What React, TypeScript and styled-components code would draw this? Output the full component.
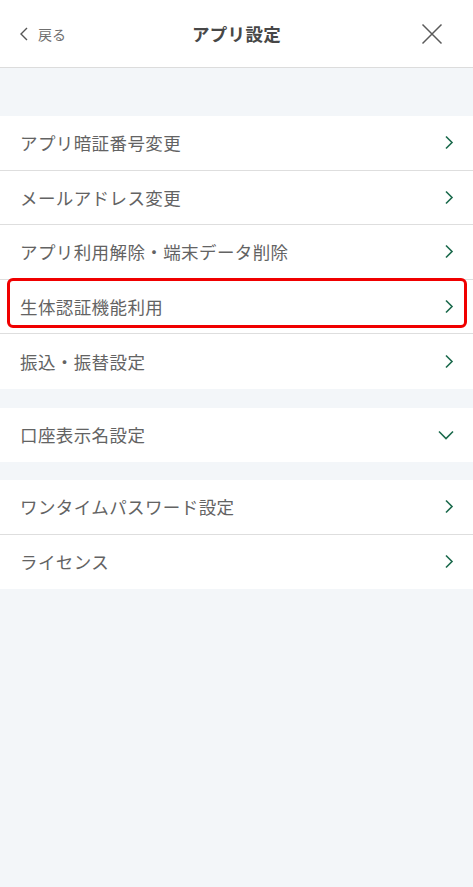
import React from "react";
import styled, { createGlobalStyle } from "styled-components";

const Global = createGlobalStyle`
  html, body { margin: 0; padding: 0; background: #f3f6f9; }
  body { font-family: "Noto Sans CJK JP", "Noto Sans", sans-serif; }
  * { box-sizing: border-box; }
`;

const Page = styled.div`
  width: 473px;
  min-height: 887px;
  background: #f3f6f9;
  display: flex;
  flex-direction: column;
`;

const Header = styled.header`
  height: 68px;
  background: #fff;
  border-bottom: 1px solid #dcdcdc;
  display: grid;
  grid-template-columns: 1fr auto 1fr;
  align-items: center;
  padding: 0 19px;
`;

const Back = styled.div`
  display: flex;
  align-items: center;
  gap: 9px;
  color: #6f6f6f;
  font-size: 14px;
`;

const Title = styled.h1`
  margin: 0;
  font-size: 17.5px;
  font-weight: 700;
  color: #474747;
  letter-spacing: 0.3px;
`;

const Close = styled.div`
  justify-self: end;
  display: flex;
  margin-right: 11px;
`;

const Group = styled.section<{ $gap: number }>`
  margin-top: ${(p) => p.$gap}px;
  background: #fff;
  display: flex;
  flex-direction: column;
`;

const Row = styled.div`
  position: relative;
  height: 54.5px;
  display: flex;
  align-items: center;
  justify-content: space-between;
  padding: 0 19px 0 20px;
  border-bottom: 1px solid #dedede;
  &:last-child { border-bottom: none; }
`;

const Label = styled.span`
  font-size: 17.5px;
  color: #636363;
  letter-spacing: 0.4px;
`;

const Highlight = styled.div`
  position: absolute;
  left: 7px;
  right: 6px;
  top: -2px;
  bottom: 5px;
  border: 3px solid #f00000;
  border-radius: 6px;
  pointer-events: none;
`;

const ChevronRight = () => (
  <svg width="10" height="15" viewBox="0 0 10 15">
    <path d="M2 1.5 L8 7.5 L2 13.5" fill="none" stroke="#1b6a4c" strokeWidth="1.6" />
  </svg>
);

const ChevronDown = () => (
  <svg width="16" height="10" viewBox="0 0 16 10">
    <path d="M1 1.5 L8 8.5 L15 1.5" fill="none" stroke="#1b6a4c" strokeWidth="1.6" />
  </svg>
);

type Item = { label: string; down?: boolean; hl?: boolean };

const groups: { gap: number; items: Item[] }[] = [
  {
    gap: 48,
    items: [
      { label: "アプリ暗証番号変更" },
      { label: "メールアドレス変更" },
      { label: "アプリ利用解除・端末データ削除" },
      { label: "生体認証機能利用", hl: true },
      { label: "振込・振替設定" },
    ],
  },
  { gap: 19, items: [{ label: "口座表示名設定", down: true }] },
  {
    gap: 18,
    items: [{ label: "ワンタイムパスワード設定" }, { label: "ライセンス" }],
  },
];

export default function App() {
  return (
    <Page>
      <Global />
      <Header>
        <Back>
          <svg width="10" height="14" viewBox="0 0 10 14">
            <path d="M8 1 L2 7 L8 13" fill="none" stroke="#555" strokeWidth="1.4" />
          </svg>
          <span>戻る</span>
        </Back>
        <Title>アプリ設定</Title>
        <Close>
          <svg width="22" height="22" viewBox="0 0 22 22">
            <path d="M1.5 1.5 L20.5 20.5 M20.5 1.5 L1.5 20.5" fill="none" stroke="#5a5a5a" strokeWidth="1.5" />
          </svg>
        </Close>
      </Header>
      {groups.map((g, gi) => (
        <Group key={gi} $gap={g.gap}>
          {g.items.map((it) => (
            <Row key={it.label}>
              <Label>{it.label}</Label>
              {it.down ? <ChevronDown /> : <ChevronRight />}
              {it.hl && <Highlight />}
            </Row>
          ))}
        </Group>
      ))}
    </Page>
  );
}
